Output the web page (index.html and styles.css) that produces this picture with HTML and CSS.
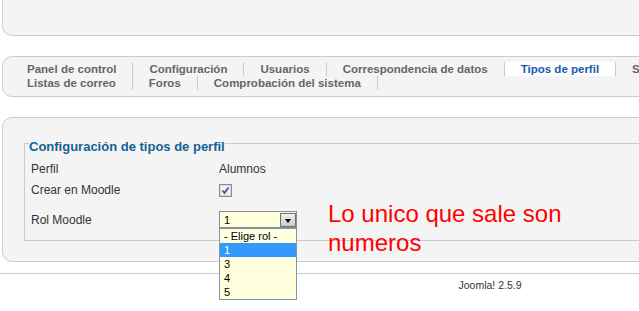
FILE: index.html
```html
<!DOCTYPE html>
<html lang="es">
<head>
    <meta charset="UTF-8">
    <meta name="viewport" content="width=device-width, initial-scale=1.0">
    <title>Tipos de perfil</title>
    <link rel="stylesheet" href="styles.css">
</head>
<body>
    <div class="page">
        <div class="header"></div>

        <div class="submenu-box">
            <ul class="submenu">
                <li><a href="#">Panel de control</a></li>
                <li><a href="#">Configuración</a></li>
                <li><a href="#">Usuarios</a></li>
                <li><a href="#">Correspondencia de datos</a></li>
                <li class="active"><a href="#">Tipos de perfil</a></li>
                <li><a href="#">Sincronización</a></li>
            </ul>
            <ul class="submenu">
                <li><a href="#">Listas de correo</a></li>
                <li><a href="#">Foros</a></li>
                <li><a href="#">Comprobación del sistema</a></li>
            </ul>
        </div>

        <div class="content-box">
            <fieldset class="adminform">
                <legend>Configuración de tipos de perfil</legend>
                <div class="row row-perfil">
                    <span class="label">Perfil</span>
                    <span class="value">Alumnos</span>
                </div>
                <div class="row row-crear">
                    <span class="label">Crear en Moodle</span>
                    <span class="value">
                        <svg class="checkbox" width="13" height="13" viewBox="0 0 13 13">
                            <rect x="0.5" y="0.5" width="12" height="12" fill="#e9e9ee" stroke="#8c8c8c"/>
                            <rect x="1.5" y="1.5" width="10" height="10" fill="#f2f2f6" stroke="#d6d6de"/>
                            <path d="M3.5 6.5 L5.5 9 L9.5 3.5" fill="none" stroke="#3f4f9c" stroke-width="1.8"/>
                        </svg>
                    </span>
                </div>
                <div class="row row-rol">
                    <span class="label">Rol Moodle</span>
                    <span class="value">
                        <span class="select">
                            <span class="select-text">1</span>
                            <span class="select-button"></span>
                            <ul class="select-list">
                                <li>- Elige rol -</li>
                                <li class="selected">1</li>
                                <li>3</li>
                                <li>4</li>
                                <li>5</li>
                            </ul>
                        </span>
                    </span>
                </div>
            </fieldset>
        </div>
    </div>

    <div class="footer">Joomla! 2.5.9</div>

    <div class="note">Lo unico que sale son<br>numeros</div>
</body>
</html>
```

FILE: styles.css
```css
html {
    overflow: hidden;
}
body {
    margin: 0;
    min-height: 100vh;
    font-family: "Liberation Sans", Arial, sans-serif;
    font-size: 12px;
    color: #333;
    background-color: #fff;
}
.page {
    width: 976px;
    padding-left: 2px;
}
.header {
    height: 35px;
    background-color: #f4f4f4;
    border: 1px solid #ccc;
    border-top: none;
    border-radius: 0 0 10px 10px;
}
.submenu-box {
    margin-top: 20px;
    padding: 5px 0 6px 8px;
    background-color: #f4f4f4;
    border: 1px solid #ccc;
    border-radius: 10px;
}
.submenu {
    display: flex;
    list-style: none;
    margin: 0;
    padding: 0;
}
.submenu li {
    padding: 0 16px;
    line-height: 14px;
    border-right: 1px solid #ccc;
}
.submenu a {
    color: #666;
    font-size: 11.5px;
    font-weight: bold;
    text-decoration: none;
}
.submenu li.active {
    background-color: #fff;
}
.submenu li.active a {
    color: #135cae;
}
.content-box {
    margin-top: 20px;
    padding: 14px 0 20px 0;
    background-color: #f4f4f4;
    border: 1px solid #ccc;
    border-radius: 10px;
}
.adminform {
    margin: 0 0 0 21px;
    padding: 0 0 12px 4px;
    border: 1px solid #ccc;
    border-right: none;
}
.adminform legend {
    padding: 7px 0 0 0;
    font-size: 13px;
    line-height: 15px;
    font-weight: bold;
    color: #146295;
}
.row {
    display: flex;
    align-items: center;
    padding-left: 2px;
}
.row-perfil {
    margin-top: 4px;
    height: 21px;
}
.row-crear {
    height: 22px;
}
.row-rol {
    margin-top: 10px;
    height: 17px;
}
.label {
    width: 188px;
}
.value {
    display: flex;
    align-items: center;
}
.select {
    position: relative;
    display: flex;
    align-items: center;
    justify-content: space-between;
    box-sizing: border-box;
    width: 78px;
    height: 17px;
    border: 1px solid #8c8c8c;
    background-color: #ffffdd;
    font-size: 11px;
    color: #000;
}
.select-text {
    padding-left: 4px;
}
.select-button {
    position: relative;
    box-sizing: border-box;
    width: 16px;
    height: 14px;
    border: 1px solid #6f6f6f;
    background: linear-gradient(#f0f0f0, #c9c9c9);
}
.select-button::after {
    content: "";
    position: absolute;
    left: 4px;
    top: 5px;
    border-left: 3px solid transparent;
    border-right: 3px solid transparent;
    border-top: 4px solid #000;
}
.select-list {
    position: absolute;
    top: 16px;
    left: -1px;
    box-sizing: border-box;
    width: 78px;
    margin: 0;
    padding: 0;
    list-style: none;
    border: 1px solid #7a96b8;
    background-color: #ffffdd;
}
.select-list li {
    height: 14px;
    line-height: 14px;
    padding-left: 4px;
}
.select-list li.selected {
    background-color: #3399ff;
    color: #fff;
}
.footer {
    width: 980px;
    margin-top: 11px;
    padding-top: 5px;
    border-top: 1px solid #ccc;
    text-align: center;
    font-size: 10.5px;
    line-height: 13px;
    color: #333;
}
.note {
    position: absolute;
    left: 328px;
    top: 199px;
    font-size: 24px;
    line-height: 29px;
    color: #f00;
}
```
